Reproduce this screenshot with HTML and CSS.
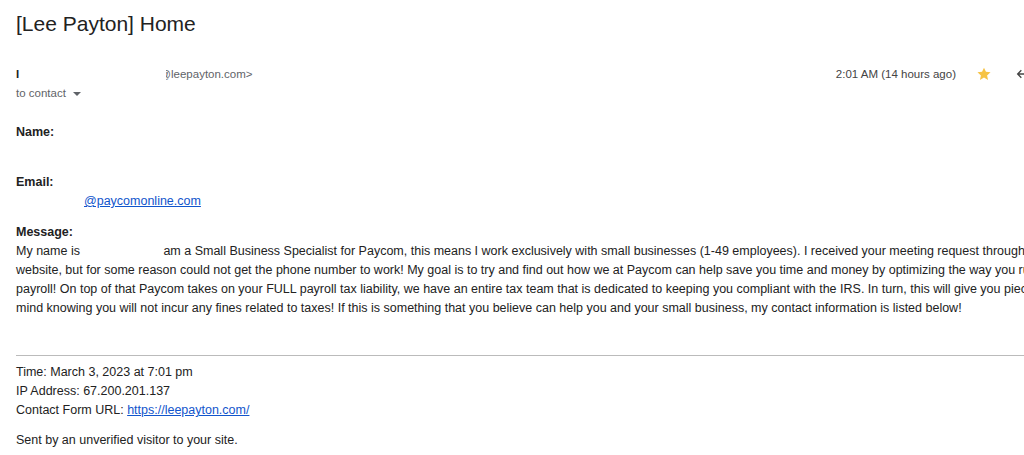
FILE: index.html
```html
<!DOCTYPE html>
<html lang="en">
<head>
    <meta charset="UTF-8">
    <meta name="viewport" content="width=device-width, initial-scale=1.0">
    <title>[Lee Payton] Home</title>
    <link rel="stylesheet" href="styles.css">
</head>
<body>
    <div class="mail">
        <h1 class="subject">[Lee Payton] Home</h1>

        <div class="sender-row">
            <div class="from">
                <span class="from-name">I</span>
                <span class="from-addr"><span class="clip">@</span>leepayton.com&gt;</span>
            </div>
            <div class="meta">
                <span class="date">2:01 AM (14 hours ago)</span>
                <svg class="star" width="16" height="16" viewBox="0 0 24 24"><path d="M12 2.5l2.9 6.3 6.9.7-5.2 4.6 1.5 6.8L12 17.4l-6.1 3.5 1.5-6.8-5.2-4.6 6.9-.7z" fill="#f6c344"/></svg>
                <svg class="reply" width="16" height="16" viewBox="0 0 24 24"><path d="M20 12H6M11 6.5L5.5 12l5.5 5.5" fill="none" stroke="#444" stroke-width="2"/></svg>
            </div>
        </div>
        <div class="to-line">to contact <span class="caret"></span></div>

        <div class="body">
            <div class="field">
                <div class="label">Name:</div>
                <div class="value"></div>
            </div>
            <div class="field">
                <div class="label">Email:</div>
                <div class="value email"><a href="#">@paycomonline.com</a></div>
            </div>
            <div class="field">
                <div class="label">Message:</div>
                <p class="message">My name is <span class="blank"></span>am a Small Business Specialist for Paycom, this means I work exclusively with small businesses (1-49 employees). I received your meeting request through your<br>website, but for some reason could not get the phone number to work! My goal is to try and find out how we at Paycom can help save you time and money by optimizing the way you run your<br>payroll! On top of that Paycom takes on your FULL payroll tax liability, we have an entire tax team that is dedicated to keeping you compliant with the IRS. In turn, this will give you piece of<br>mind knowing you will not incur any fines related to taxes! If this is something that you believe can help you and your small business, my contact information is listed below!</p>
            </div>

            <hr class="divider">

            <div class="footer-info">
                <div>Time: March 3, 2023 at 7:01 pm</div>
                <div>IP Address: 67.200.201.137</div>
                <div>Contact Form URL: <a href="#">https://leepayton.com/</a></div>
            </div>
            <p class="note">Sent by an unverified visitor to your site.</p>
        </div>
    </div>
</body>
</html>
```

FILE: styles.css
```css
html, body {
    margin: 0;
    padding: 0;
    background: #ffffff;
    overflow: hidden;
}

body {
    font-family: "Liberation Sans", Arial, sans-serif;
    color: #222;
}

.mail {
    width: 1200px;
    padding: 0 0 0 16px;
}

.subject {
    margin: 0;
    padding-top: 10px;
    font-size: 21px;
    font-weight: normal;
    line-height: 28px;
    color: #222;
}

.sender-row {
    display: flex;
    align-items: center;
    width: 1014px;
    margin-top: 26px;
    height: 20px;
    font-size: 11.5px;
}

.from {
    flex: 1;
    display: flex;
    align-items: center;
}

.from-name {
    font-weight: bold;
    color: #222;
    width: 150px;
}

.from-addr {
    color: #5f6368;
}

.clip {
    display: inline-block;
    width: 5px;
    overflow: hidden;
    direction: rtl;
    vertical-align: bottom;
}

.meta {
    display: flex;
    align-items: center;
}

.date {
    color: #444;
    margin-right: 20px;
}

.star {
    margin-right: 22px;
}

.to-line {
    font-size: 11.5px;
    color: #5f6368;
    line-height: 18px;
    margin-top: 0;
}

.caret {
    display: inline-block;
    width: 0;
    height: 0;
    margin-left: 4px;
    border-left: 4px solid transparent;
    border-right: 4px solid transparent;
    border-top: 4px solid #5f6368;
    vertical-align: middle;
}

.body {
    font-size: 12.5px;
    line-height: 19px;
    margin-top: 21px;
}

.field {
    margin-bottom: 12px;
}

.label {
    font-weight: bold;
}

.value {
    min-height: 19px;
}

.value.email {
    padding-left: 68px;
}

a {
    color: #1155cc;
}

.message {
    margin: 0;
    white-space: nowrap;
}

.blank {
    display: inline-block;
    width: 80px;
}

.divider {
    border: 0;
    border-top: 1px solid #bbb;
    margin: 37px 0 7px 0;
}

.note {
    margin: 11px 0 0 0;
}
```
